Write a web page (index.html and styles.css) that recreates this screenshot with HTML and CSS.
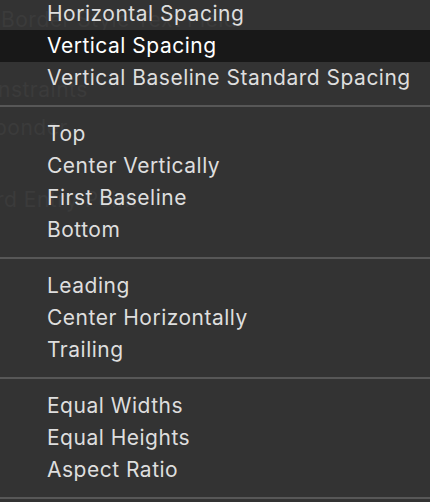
FILE: index.html
```html
<!DOCTYPE html>
<html>
<head>
<meta charset="utf-8">
<link rel="stylesheet" href="styles.css">
</head>
<body>
<div class="backdrop">
  <div class="ghost g1">Border Style Text Field</div>
  <div class="ghost g2">nstraints</div>
  <div class="ghost g3">ponder</div>
  <div class="ghost g4">rd Entry Point</div>
</div>
<div class="menu">
  <div class="group">
    <div class="item">Horizontal Spacing</div>
    <div class="item active">Vertical Spacing</div>
    <div class="item">Vertical Baseline Standard Spacing</div>
  </div>
  <div class="sep"></div>
  <div class="group">
    <div class="item">Top</div>
    <div class="item">Center Vertically</div>
    <div class="item">First Baseline</div>
    <div class="item">Bottom</div>
  </div>
  <div class="sep"></div>
  <div class="group">
    <div class="item">Leading</div>
    <div class="item">Center Horizontally</div>
    <div class="item">Trailing</div>
  </div>
  <div class="sep"></div>
  <div class="group">
    <div class="item">Equal Widths</div>
    <div class="item">Equal Heights</div>
    <div class="item">Aspect Ratio</div>
  </div>
  <div class="sep"></div>
</div>
</body>
</html>
```
FILE: styles.css
```css
html, body {
  margin: 0;
  padding: 0;
  width: 430px;
  height: 502px;
  overflow: hidden;
  background: #333333;
  font-family: Inter, "Noto Sans", sans-serif;
}
body {
  position: relative;
}
.backdrop {
  display: flex;
  flex-direction: column;
  color: #3b3b3b;
  font-size: 21px;
  letter-spacing: 0.5px;
}
.ghost {
  white-space: nowrap;
  line-height: 24px;
}
.g1 { margin-top: 8px; margin-left: 1px; }
.g2 { margin-top: 46px; margin-left: -2px; }
.g3 { margin-top: 14px; margin-left: -6px; }
.g4 { margin-top: 48px; margin-left: -4px; }
.menu {
  position: absolute;
  top: -2px;
  left: 0;
  right: 0;
  display: flex;
  flex-direction: column;
}
.item {
  height: 32px;
  line-height: 32px;
  padding-left: 47px;
  font-size: 21px;
  letter-spacing: 0.5px;
  color: #dedede;
  white-space: nowrap;
}
.item.active {
  background: #181818;
  color: #ffffff;
}
.sep {
  height: 2px;
  margin: 11px 0;
  background: #575757;
}
```
